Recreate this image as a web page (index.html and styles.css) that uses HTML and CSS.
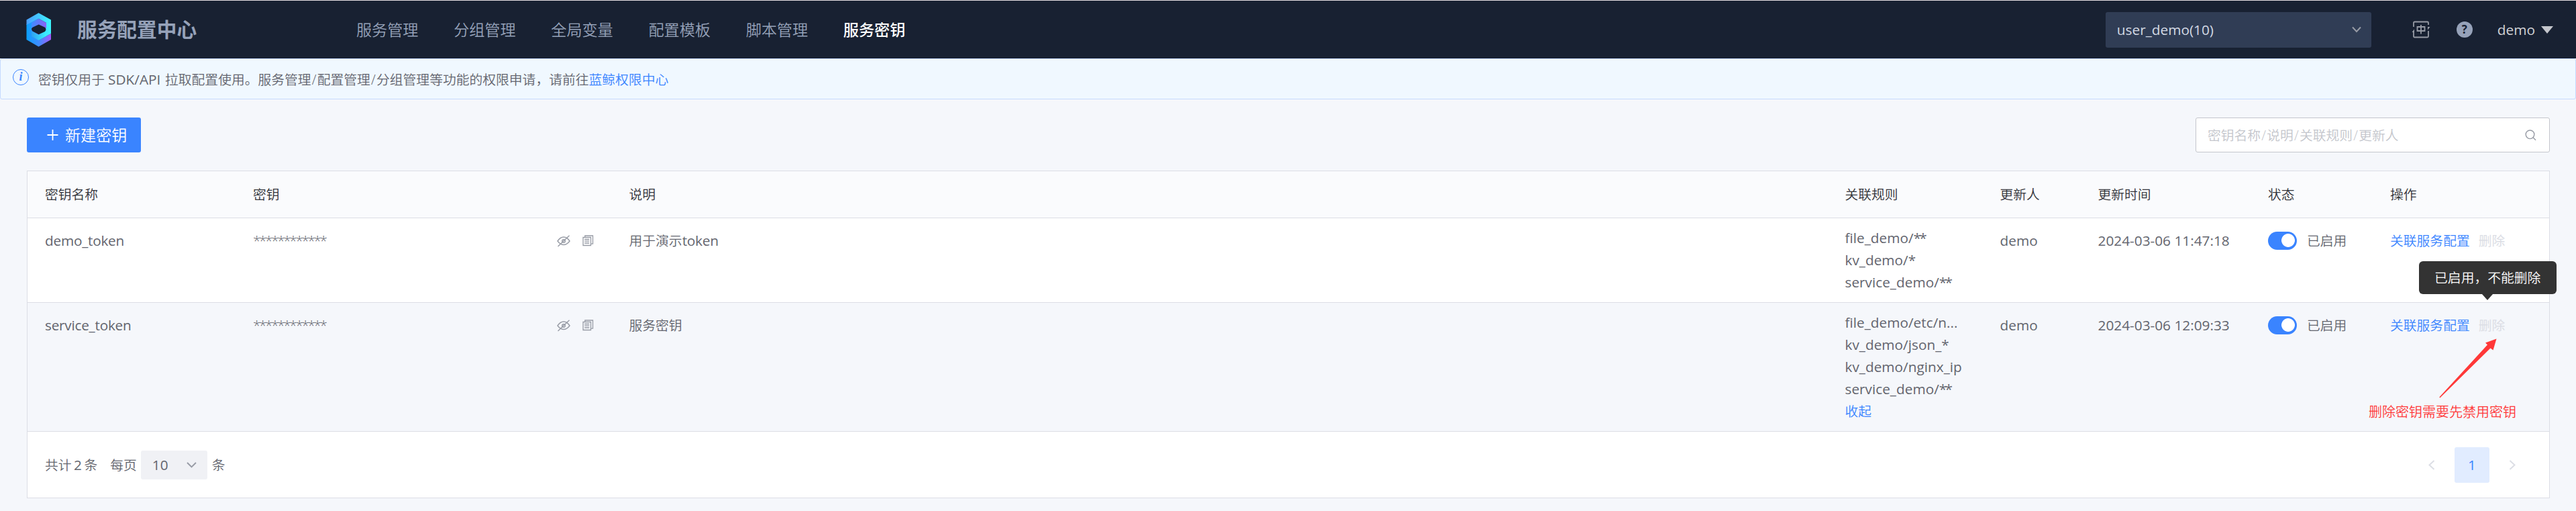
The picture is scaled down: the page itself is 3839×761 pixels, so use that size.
FILE: index.html
```html
<!DOCTYPE html>
<html lang="zh-CN">
<head>
<meta charset="utf-8">
<title>服务配置中心</title>
<link rel="stylesheet" href="styles.css">
</head>
<body>
<svg class="defs" width="0" height="0" aria-hidden="true">
  <symbol id="eye" viewBox="0 0 20 18"><g fill="none" stroke="currentColor" stroke-width="1.4"><path d="M1 9C4 4.500 7 3 10 3s6 1.500 9 6c-3 4-6 5.500-9 5.500S4 13 1 9z"/><circle cx="10" cy="9" r="2.300"/><path d="M18.500.800L1.500 17"/></g></symbol>
  <symbol id="copy" viewBox="0 0 17 17"><g fill="none" stroke="currentColor" stroke-width="1.300"><path d="M1 3.500h11.500V15.500H1zM3.800 3.300V1H15.500v12.200h-2.800M3.200 6.500h7M3.200 9.200h7M3.200 12h7"/></g></symbol>
</svg>
<header class="header">
  <svg class="logo" viewBox="0 0 38 51">
    <defs>
      <linearGradient id="ga" x1="0" y1="0" x2="1" y2="0"><stop offset="0" stop-color="#4a9dff"/><stop offset="1" stop-color="#3cf6ff"/></linearGradient>
      <linearGradient id="gb" x1="0" y1="0" x2="1" y2="0"><stop offset="0" stop-color="#0aa0ff"/><stop offset=".5" stop-color="#3f8dff"/><stop offset="1" stop-color="#a35bff"/></linearGradient>
      <linearGradient id="gc" x1="0" y1="0" x2="1" y2="0"><stop offset="0" stop-color="#3f8cff"/><stop offset="1" stop-color="#8a63f5"/></linearGradient>
      <linearGradient id="gd" x1="0" y1="0" x2="1" y2="0"><stop offset="0" stop-color="#2fa0f0"/><stop offset="1" stop-color="#3cf0ff"/></linearGradient>
    </defs>
    <path fill="url(#gb)" d="M.500 17L18.500 8.700V41L37 31V40L18.500 50.500.500 40z"/>
    <path fill="url(#ga)" d="M18.500.300L37 10.500V31L18.500 41 17 33 30 26V15L18.500 8.700.500 18V10.500z"/>
    <path fill="url(#gc)" d="M18.500 8.700L30 15V26L18.500 33 8 27V15z"/>
    <path fill="url(#gd)" d="M8 27L18.500 33 30 22.500V34.500L18.500 41 8 35z"/>
    <path fill="#182132" d="M18.700 17.500L28 21.800Q29.500 23 29.500 25.500L28 28 18.700 32.300 9.500 27.500Q8 26 8 23.500L9.500 21.800z"/>
  </svg>
  <h1 class="title">服务配置中心</h1>
  <nav class="nav"><a>服务管理</a><a>分组管理</a><a>全局变量</a><a>配置模板</a><a>脚本管理</a><a class="active">服务密钥</a></nav>
  <div class="space"><span class="latin">user_demo(10)</span><svg width="14" height="10" viewBox="0 0 14 10"><path d="M1 1.500l6 6.500 6-6.500" fill="none" stroke="#979ba5" stroke-width="2"/></svg></div>
  <svg class="lang" viewBox="0 0 28 26"><g fill="none" stroke="#979ba5" stroke-width="1.800"><path d="M3 9V3Q3 1.500 4.500 1.500H23.500Q25 1.500 25 3V6M25 15v8q0 1.500-1.500 1.500H4.500Q3 24.500 3 23V17M8.500 9h11v6h-11zM14 6v13.500"/></g><path fill="#979ba5" d="M.500 17L4 12.500V17zM27.500 9L24 13.500V9z"/></svg>
  <span class="help">?</span>
  <div class="user"><span class="latin">demo</span><i class="tri"></i></div>
</header>
<div class="alert">
  <span class="info">i</span>
  <p>密钥仅用于 <span class="latin sdk">SDK/API</span> 拉取配置使用。服务管理<span class="slash">/</span>配置管理<span class="slash">/</span>分组管理等功能的权限申请，请前往<a>蓝鲸权限中心</a></p>
</div>
<main class="main">
  <div class="toolbar">
    <button class="create"><svg width="17" height="18" viewBox="0 0 17 18"><path d="M8.500 1v16M.500 9h16" stroke="#fff" stroke-width="1.800"/></svg>新建密钥</button>
    <div class="search"><span>密钥名称<span class="slash">/</span>说明<span class="slash">/</span>关联规则<span class="slash">/</span>更新人</span><svg width="17" height="17" viewBox="0 0 17 17"><g fill="none" stroke="#979ba5" stroke-width="1.400"><circle cx="7.500" cy="7.300" r="6.300"/><path d="M12 11.800l4 4"/></g></svg></div>
  </div>
  <section class="table">
    <div class="row head"><div>密钥名称</div><div>密钥</div><div>说明</div><div>关联规则</div><div>更新人</div><div>更新时间</div><div>状态</div><div>操作</div></div>
    <div class="row first">
      <div class="latin name">demo_token</div>
      <div class="key"><span class="mask">************</span><svg class="eye"><use href="#eye"/></svg><svg class="copy"><use href="#copy"/></svg></div>
      <div>用于演示<span class="latin name">token</span></div>
      <div class="rules latin"><p>file_demo/<b>**</b></p><p>kv_demo/<b>*</b></p><p>service_demo/<b>**</b></p></div>
      <div class="latin">demo</div>
      <div class="latin">2024-03-06 11:47:18</div>
      <div class="state"><i class="switch"></i>已启用</div>
      <div class="ops"><a>关联服务配置</a><span class="del">删除</span></div>
    </div>
    <div class="row second">
      <div class="latin name">service_token</div>
      <div class="key"><span class="mask">************</span><svg class="eye"><use href="#eye"/></svg><svg class="copy"><use href="#copy"/></svg></div>
      <div>服务密钥</div>
      <div class="rules latin"><p>file_demo/etc/n...</p><p>kv_demo/json_<b>*</b></p><p>kv_demo/nginx_ip</p><p>service_demo/<b>**</b></p><a class="fold">收起</a></div>
      <div class="latin">demo</div>
      <div class="latin">2024-03-06 12:09:33</div>
      <div class="state"><i class="switch"></i>已启用</div>
      <div class="ops"><a>关联服务配置</a><span class="del">删除<span class="tip">已启用，不能删除</span></span>
        <svg class="arrow" viewBox="0 0 87 89"><path fill="#ff3838" d="M85.500.500L69 6.500l3 3L.300 87.500l1 1L76.500 14.500l4 3z"/></svg>
        <span class="note">删除密钥需要先禁用密钥</span>
      </div>
    </div>
    <footer class="foot">
      <span>共计<span class="latin num">2</span>条</span>
      <span class="per">每页</span>
      <div class="size"><span class="latin">10</span><svg width="15" height="10" viewBox="0 0 15 10"><path d="M1 1l6.500 6.500L14 1" fill="none" stroke="#979ba5" stroke-width="1.900"/></svg></div>
      <span>条</span>
      <div class="pager"><svg width="10" height="15" viewBox="0 0 10 15"><path d="M8.500 1L1.500 7.500l7 6.500" fill="none" stroke="#dcdee5" stroke-width="2"/></svg><span class="page latin">1</span><svg width="10" height="15" viewBox="0 0 10 15"><path d="M1.500 1l7 6.500-7 6.500" fill="none" stroke="#dcdee5" stroke-width="2"/></svg></div>
    </footer>
  </section>
</main>
</body>
</html>
```

FILE: styles.css
```css
* { box-sizing: border-box; }
body { margin: 0; width: 3839px; height: 761px; overflow: hidden; background: #f5f7fb; color: #63656e; font: 350 19.8px/33px "Open Sans", "Noto Sans CJK SC", sans-serif; }
p, h1 { margin: 0; }
a { color: #3a84ff; }
svg { display: block; flex: none; }
.defs { position: absolute; }
.latin { font-size: 20.8px; font-weight: 400; }
.name { letter-spacing: -0.25px; }
.sdk { margin-right: 1.5px; }
.slash { margin: 0 1.2px; }
.header { height: 87px; border-top: 1px solid #e6e0e4; background: #182132; display: flex; align-items: center; padding: 0 34px 0 39px; }
.logo { width: 38px; height: 51px; }
.title { margin-left: 38px; width: 416px; font-size: 29.7px; line-height: 44px; font-weight: 700; color: #96a2b9; }
.nav { display: flex; gap: 52.8px; font-size: 23.1px; }
.nav a { color: #96a2b9; }
.nav .active { color: #fff; font-weight: 500; }
.space { margin-left: auto; width: 396px; height: 53px; border-radius: 3px; background: #303d55; color: #d3d9e4; display: flex; align-items: center; justify-content: space-between; padding: 0 15px 0 17px; }
.lang { width: 28px; height: 26px; margin-left: 60px; }
.help { margin-left: 39px; width: 24px; height: 24px; border-radius: 50%; background: #96a2b9; color: #182132; font-size: 17px; line-height: 24px; font-weight: 700; text-align: center; }
.user { margin-left: 37px; display: flex; align-items: center; gap: 9px; color: #d0d1d6; }
.tri { border: 9px solid transparent; border-top: 11px solid #c4c6cc; border-bottom: 0; }
.alert { height: 61px; border: 1px solid #c5daff; border-radius: 3px; background: #f0f8ff; display: flex; padding: 14px 18px; }
.info { width: 24px; height: 24px; margin: 1px 14px 0 0; border: 1.6px solid #3a84ff; border-radius: 50%; color: #3a84ff; font: italic 700 18px/20px "Liberation Serif", serif; text-align: center; }
.main { padding: 27px 39px 0 40px; }
.toolbar { display: flex; justify-content: space-between; height: 52px; }
.create { width: 170px; border: 0; border-radius: 3px; background: #3a84ff; color: #fff; font: inherit; font-size: 23.1px; padding: 0 0 0 30px; display: flex; align-items: center; gap: 10px; white-space: nowrap; }
.search { width: 528px; border: 1px solid #c4c6cc; border-radius: 3px; background: #fff; color: #c4c6cc; display: flex; align-items: center; justify-content: space-between; padding: 0 19px 0 17px; }
.table { margin-top: 27px; width: 3760px; height: 488px; border: 1px solid #dcdee5; background: #fff; }
.row { display: grid; grid-template-columns: 310px 560.5px 1812px 231px 146px 253.5px 182px 1fr; border-bottom: 1px solid #dcdee5; padding-left: 26px; }
.row > div { padding-top: 17px; white-space: nowrap; }
.head { height: 70px; background: #fafbfd; color: #313238; }
.row.head > div { padding-top: 18px; }
.row.first { height: 126px; }
.row.second { height: 192px; background: #f5f7fb; }
.row > .rules { padding-top: 13px; }
.rules b { font-weight: inherit; letter-spacing: -2.7px; }
.fold { display: block; font-size: 19.8px; font-weight: 350; line-height: 33px; }
.key { display: flex; }
.mask { width: 453px; font-size: 20.8px; letter-spacing: -2.4px; }
.eye { width: 20px; height: 18px; margin: 8px 18px 0 0; color: #979ba5; }
.copy { width: 17px; height: 17px; margin-top: 8px; color: #979ba5; }
.state { display: flex; }
.switch { width: 43px; height: 27px; margin: 3px 15px 0 0; border-radius: 14px; background: radial-gradient(circle at 30px 13px, #fff 9.5px, #3a84ff 10.3px); }
.ops { position: relative; display: flex; gap: 13px; }
.del { position: relative; color: #dcdee5; font-weight: 400; height: 33px; }
.tip { position: absolute; left: -89px; top: -79px; width: 205px; height: 49px; border-radius: 6px; background: #333; color: #fff; font-weight: 350; text-align: center; line-height: 49px; }
.tip::after { content: ""; position: absolute; left: 94px; top: 49px; border: 8.5px solid transparent; border-top: 9px solid #333; border-bottom: 0; }
.arrow { position: absolute; left: 73px; top: 53px; width: 87px; height: 89px; }
.note { position: absolute; left: -32px; top: 146px; color: #ff3838; font-size: 20px; }
.foot { display: flex; align-items: center; height: 99px; padding: 0 50px 0 26px; }
.num { margin: 0 3.5px; }
.per { margin: 0 6px 0 19px; }
.size { width: 99px; height: 43px; margin-right: 7px; border-radius: 3px; background: #f0f1f5; display: flex; align-items: center; justify-content: space-between; padding: 0 16px 0 17px; }
.pager { margin-left: auto; display: flex; align-items: center; gap: 29px; }
.page { width: 52px; height: 53px; border-radius: 3px; background: #e1ecff; color: #3a84ff; line-height: 53px; text-align: center; }
```
